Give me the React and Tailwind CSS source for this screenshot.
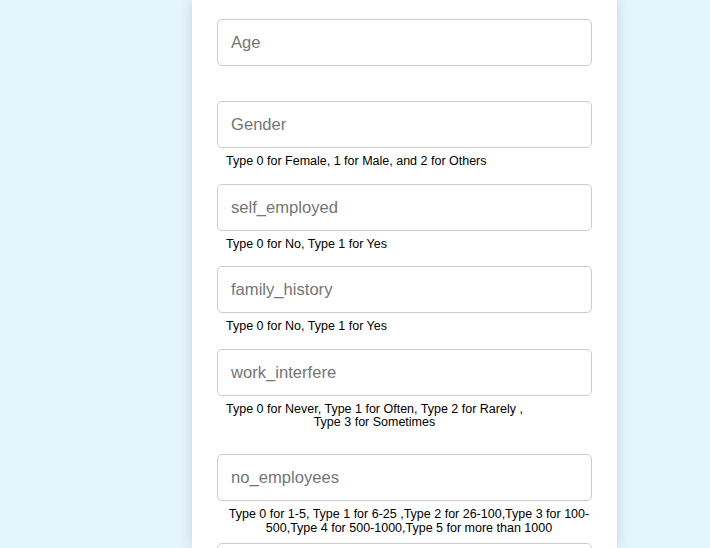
const font = { fontFamily: '"Liberation Sans", Arial, sans-serif' }

function Field({ placeholder, children, helperClass = '', gapClass }) {
  return (
    <div className={gapClass}>
      <input
        type="text"
        placeholder={placeholder}
        className="block w-full h-[47px] rounded-[5px] border border-[#cccccc] bg-white pl-[13px] text-[16.6px] text-[#333] placeholder:text-[#757575] outline-none"
        style={font}
      />
      {children && (
        <div className={`pl-[9px] text-[12.5px] leading-[14px] text-black ${helperClass}`}>{children}</div>
      )}
    </div>
  )
}

export default function App() {
  return (
    <div className="h-[548px] overflow-hidden bg-[#e3f4fd]" style={font}>
      <div className="ml-[192px] w-[425px] h-full bg-white px-[25px] pt-[19px] shadow-[0_0_12px_rgba(0,0,0,0.12)]">
        <Field placeholder="Age" gapClass="mb-[35px]" />
        <Field placeholder="Gender" helperClass="mt-[6px] mb-[16px]">
          Type 0 for Female, 1 for Male, and 2 for Others
        </Field>
        <Field placeholder="self_employed" helperClass="mt-[6px] mb-[15px]">
          Type 0 for No, Type 1 for Yes
        </Field>
        <Field placeholder="family_history" helperClass="mt-[6px] mb-[16px]">
          Type 0 for No, Type 1 for Yes
        </Field>
        <Field placeholder="work_interfere" helperClass="mt-[7px] mb-[25px]">
          <span className="inline-block text-center leading-[13px]">
            Type 0 for Never, Type 1 for Often, Type 2 for Rarely ,<br />
            Type 3 for Sometimes
          </span>
        </Field>
        <Field placeholder="no_employees" helperClass="mt-[6px] mb-[8px] text-center">
          Type 0 for 1-5, Type 1 for 6-25 ,Type 2 for 26-100,Type 3 for 100-<br />
          500,Type 4 for 500-1000,Type 5 for more than 1000
        </Field>
        <Field placeholder="" />
      </div>
    </div>
  )
}
